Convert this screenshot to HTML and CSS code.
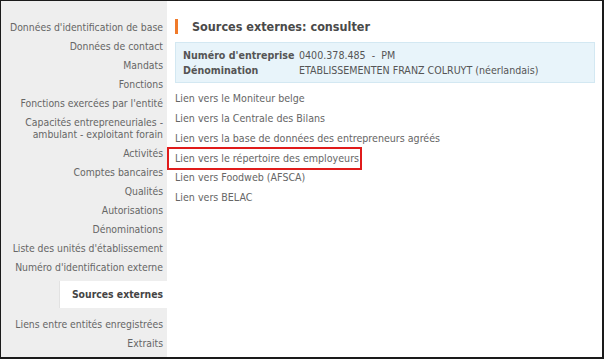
FILE: index.html
```html
<!DOCTYPE html>
<html lang="fr">
<head>
<meta charset="utf-8">
<title>Sources externes: consulter</title>
<link rel="stylesheet" href="styles.css">
</head>
<body>
<div class="frame">
  <nav class="sidebar">
    <a class="nav-item first">Données d'identification de base</a>
    <a class="nav-item">Données de contact</a>
    <a class="nav-item">Mandats</a>
    <a class="nav-item">Fonctions</a>
    <a class="nav-item">Fonctions exercées par l'entité</a>
    <a class="nav-item">Capacités entrepreneuriales -<br>ambulant - exploitant forain</a>
    <a class="nav-item">Activités</a>
    <a class="nav-item">Comptes bancaires</a>
    <a class="nav-item">Qualités</a>
    <a class="nav-item">Autorisations</a>
    <a class="nav-item">Dénominations</a>
    <a class="nav-item">Liste des unités d'établissement</a>
    <a class="nav-item">Numéro d'identification externe</a>
    <a class="nav-item active">Sources externes</a>
    <a class="nav-item">Liens entre entités enregistrées</a>
    <a class="nav-item">Extraits</a>
  </nav>
  <main class="content">
    <h1 class="title">Sources externes: consulter</h1>
    <div class="info">
      <div class="info-row"><span class="label">Numéro d'entreprise</span><span class="value">0400.378.485 &nbsp;- &nbsp;PM</span></div>
      <div class="info-row"><span class="label">Dénomination</span><span class="value">ETABLISSEMENTEN FRANZ COLRUYT (néerlandais)</span></div>
    </div>
    <ul class="links">
      <li><a>Lien vers le Moniteur belge</a></li>
      <li><a>Lien vers la Centrale des Bilans</a></li>
      <li><a>Lien vers la base de données des entrepreneurs agréés</a></li>
      <li class="highlight"><a>Lien vers le répertoire des employeurs</a></li>
      <li><a>Lien vers Foodweb (AFSCA)</a></li>
      <li><a>Lien vers BELAC</a></li>
    </ul>
  </main>
</div>
</body>
</html>
```
FILE: styles.css
```css
html, body {
  margin: 0;
  padding: 0;
  background: #fff;
}
.frame {
  box-sizing: border-box;
  width: 604px;
  height: 359px;
  border: 1px solid #1a1a1a;
  border-right-width: 2px;
  border-bottom-width: 2px;
  display: flex;
  font-family: "DejaVu Sans", Verdana, sans-serif;
  font-stretch: condensed;
  font-size: 10.6px;
  color: #666;
  overflow: hidden;
}
.sidebar {
  width: 166px;
  flex: none;
  background: #eeeeee;
  display: flex;
  flex-direction: column;
  align-items: stretch;
  padding-top: 18.5px;
  font-size: 10.35px;
}
.nav-item {
  display: block;
  text-align: right;
  padding: 3.5px 4px 3.5px 0;
  line-height: 12px;
  white-space: nowrap;
}
.nav-item.first {
  margin-top: -2.5px;
}
.nav-item.active {
  margin: 4.5px 0 7px 58px;
  padding: 7px 4px 8px 0;
  background: #fff;
  border-left: 1px solid #e2e2e2;
  font-weight: bold;
  color: #444;
}
.content {
  flex: 1;
  padding: 18px 7px 0 8px;
}
.title {
  margin: 0;
  font-size: 12.5px;
  line-height: 15px;
  color: #4a4a4a;
  font-weight: bold;
  border-left: 3px solid #f07a2a;
  padding-left: 14px;
}
.info {
  margin-top: 8px;
  background: #e8f4fa;
  border: 1px solid #d3e8f2;
  padding: 5px 7px 4px;
}
.info-row {
  display: flex;
  line-height: 15px;
}
.label {
  width: 116px;
  flex: none;
  font-weight: bold;
  color: #555;
}
.value {
  color: #555;
}
.links {
  list-style: none;
  margin: 6px 0 0;
  padding: 0;
}
.links li {
  line-height: 19.8px;
  white-space: nowrap;
}
.links li.highlight {
  box-sizing: border-box;
  margin: -1.4px 0 -2px -8px;
  padding-left: 6px;
  width: 195px;
  border: 2px solid #e01b1b;
  line-height: 19px;
}
```
